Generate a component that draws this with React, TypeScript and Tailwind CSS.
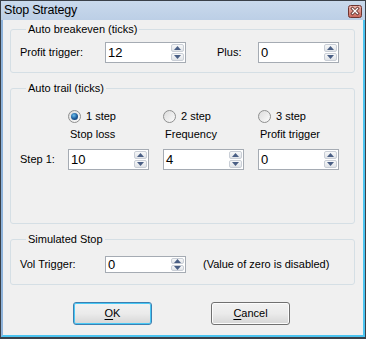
import React from "react";

function Arrow({ up }: { up?: boolean }) {
  return (
    <svg width="7" height="4" viewBox="0 0 7 4" className="block">
      {up ? (
        <polygon points="0,4 7,4 3.5,0" fill="#4a5f85" />
      ) : (
        <polygon points="0,0 7,0 3.5,4" fill="#4a5f85" />
      )}
    </svg>
  );
}

function Spin({ value, short }: { value: string; short?: boolean }) {
  return (
    <div
      className={
        "flex w-[81px] border border-[#a5abb3] bg-white " +
        (short ? "h-[17px]" : "h-[21px]")
      }
    >
      <div className="flex flex-1 items-center pl-[2px] text-[13px] leading-none text-black">
        {value}
      </div>
      <div className="flex w-[15px] flex-col gap-[1px] p-[1px]">
        <div className="flex flex-1 items-center justify-center rounded-[2px] border border-[#c9ced6] bg-gradient-to-b from-[#f7f8f9] to-[#e1e4e8]">
          <Arrow up />
        </div>
        <div className="flex flex-1 items-center justify-center rounded-[2px] border border-[#c9ced6] bg-gradient-to-b from-[#f7f8f9] to-[#e1e4e8]">
          <Arrow />
        </div>
      </div>
    </div>
  );
}

function Radio({ checked, label }: { checked?: boolean; label: string }) {
  return (
    <div className="flex h-[13px] items-center">
      <div className="flex h-[13px] w-[13px] items-center justify-center rounded-full border border-[#8e8f8f] bg-gradient-to-br from-[#dcdcdc] to-[#fbfbfb]">
        {checked && (
          <div className="h-[7px] w-[7px] rounded-full bg-[radial-gradient(circle_at_40%_35%,#6cc0ee_0%,#1f5f9e_50%,#0b2f5c_100%)]" />
        )}
      </div>
      <span className="ml-[5px]">{label}</span>
    </div>
  );
}

function Group({
  title,
  className,
  children,
}: {
  title: string;
  className: string;
  children: React.ReactNode;
}) {
  return (
    <fieldset
      className={
        "rounded-[3px] border border-[#d5dfe5] pl-[9px] " + className
      }
    >
      <legend className="ml-[6px] px-[2px] text-[11px] leading-[13px] text-black">
        {title}
      </legend>
      {children}
    </fieldset>
  );
}

export default function App() {
  return (
    <div
      className="flex h-[339px] w-[366px] flex-col border-x border-t border-b-2 border-[#3a4048] bg-[#c2d4e9] text-[11px] text-black"
      style={{ fontFamily: '"Liberation Sans", Arial, sans-serif' }}
    >
      {/* Title bar */}
      <div className="flex h-[19px] items-center justify-between bg-gradient-to-b from-[#c9d9ec] to-[#bccfe6] pl-[3px] pr-[3px]">
        <span className="text-[12.5px] leading-none tracking-[-0.2px] text-black">
          Stop Strategy
        </span>
        <svg width="14" height="13" viewBox="0 0 14 13" className="mt-[2px] block">
          <defs>
            <linearGradient id="cg" x1="0" y1="0" x2="0" y2="1">
              <stop offset="0" stopColor="#ecb6ae" />
              <stop offset="1" stopColor="#c9665a" />
            </linearGradient>
          </defs>
          <rect x="0.5" y="0.5" width="13" height="12" rx="2" fill="url(#cg)" stroke="#6e3430" />
          <path d="M4.5 3.5 L9.5 8.5 M9.5 3.5 L4.5 8.5" stroke="#5a2a26" strokeWidth="3" strokeLinecap="square" />
          <path d="M4.5 3.5 L9.5 8.5 M9.5 3.5 L4.5 8.5" stroke="#ffffff" strokeWidth="1.4" strokeLinecap="square" />
        </svg>
      </div>

      {/* Client area */}
      <div className="flex flex-1 flex-col border-l-2 border-r-2 border-b-2 border-l-[#8fb3da] border-r-[#4cc4f0] border-b-[#4cc4f0] bg-[#f0f0f0] pl-[7px] pr-[8px]">
        <Group title="Auto breakeven (ticks)" className="mt-[3px] pb-[9px] pt-[6px]">
          <div className="flex items-center">
            <span className="w-[85px]">Profit trigger:</span>
            <Spin value="12" />
            <span className="ml-[31px] w-[41px]">Plus:</span>
            <Spin value="0" />
          </div>
        </Group>

        <Group title="Auto trail (ticks)" className="mt-[9px] pb-[53px] pt-[15px]">
          <div className="flex pl-[48px]">
            <div className="w-[95px]">
              <Radio checked label="1 step" />
            </div>
            <div className="w-[95px]">
              <Radio label="2 step" />
            </div>
            <div className="w-[95px]">
              <Radio label="3 step" />
            </div>
          </div>
          <div className="mt-[5px] flex h-[13px] items-center pl-[48px] leading-[13px]">
            <span className="w-[95px] pl-[2px]">Stop loss</span>
            <span className="w-[95px] pl-[2px]">Frequency</span>
            <span className="w-[95px] pl-[2px]">Profit trigger</span>
          </div>
          <div className="mt-[8px] flex items-center">
            <span className="w-[48px]">Step 1:</span>
            <div className="w-[95px]">
              <Spin value="10" />
            </div>
            <div className="w-[95px]">
              <Spin value="4" />
            </div>
            <div className="w-[95px]">
              <Spin value="0" />
            </div>
          </div>
        </Group>

        <Group title="Simulated Stop" className="mt-[9px] pb-[11px] pt-[10px]">
          <div className="flex items-center">
            <span className="w-[85px]">Vol Trigger:</span>
            <Spin value="0" short />
            <span className="ml-[17px]">(Value of zero is disabled)</span>
          </div>
        </Group>

        <div className="mt-[17px] flex gap-[59px] pl-[63px]">
          <button className="flex h-[23px] w-[79px] items-center justify-center rounded-[3px] border border-[#3c7fb1] bg-gradient-to-b from-[#f2f2f2] via-[#ebebeb] to-[#d6d6d6] text-[11px] text-black shadow-[inset_0_0_0_1px_#48c8f5]">
            <span>
              <span className="underline underline-offset-[2px]">O</span>K
            </span>
          </button>
          <button className="flex h-[23px] w-[79px] items-center justify-center rounded-[3px] border border-[#707070] bg-gradient-to-b from-[#f2f2f2] via-[#ebebeb] to-[#d6d6d6] text-[11px] text-black shadow-[inset_0_0_0_1px_#fcfcfc]">
            <span>
              <span className="underline underline-offset-[2px]">C</span>ancel
            </span>
          </button>
        </div>
      </div>
    </div>
  );
}
